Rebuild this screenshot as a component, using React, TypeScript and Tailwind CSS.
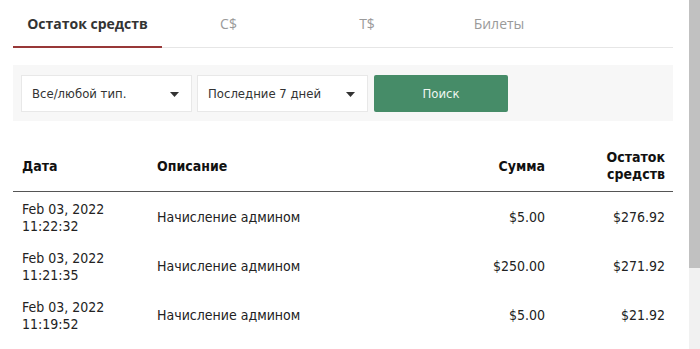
const rows = [
	{ date: "Feb 03, 2022", time: "11:22:32", desc: "Начисление админом", amount: "$5.00", balance: "$276.92" },
	{ date: "Feb 03, 2022", time: "11:21:35", desc: "Начисление админом", amount: "$250.00", balance: "$271.92" },
	{ date: "Feb 03, 2022", time: "11:19:52", desc: "Начисление админом", amount: "$5.00", balance: "$21.92" },
];

const tabs = [
	{ label: "Остаток средств", w: "w-[149px]", active: true },
	{ label: "C$", w: "w-[133px]" },
	{ label: "T$", w: "w-[144px]" },
	{ label: "Билеты", w: "w-[120px]" },
];

const Caret = () => (
	<svg width="9" height="5" viewBox="0 0 9 5" className="shrink-0">
		<path d="M0 0h9L4.5 5z" fill="#333" />
	</svg>
);

const Select = ({ label }: { label: string }) => (
	<div className="flex h-[37px] w-[171px] items-center justify-between border border-[#e8e8e8] bg-white pl-[10px] pr-[12px] pt-[2px] text-[13px] text-[#333]">
		<span>{label}</span>
		<Caret />
	</div>
);

export default function App() {
	return (
		<div className="flex h-[349px] w-[700px] overflow-hidden bg-white font-['DejaVu_Sans_Condensed','DejaVu_Sans',sans-serif]">
			<div className="w-[689px] px-[13px] pr-[16px]">
				<nav className="flex h-[48px] border-b border-[#e6e6e6] font-['Open_Sans',sans-serif] text-[14px]">
					{tabs.map((t) => (
						<div
							key={t.label}
							className={
								t.active
									? `${t.w} -mb-px flex items-center justify-center border-b-2 border-[#983838] font-bold text-[#333]`
									: `${t.w} flex items-center justify-center text-[#9a9a9a]`
							}
						>
							{t.label}
						</div>
					))}
				</nav>

				<div className="mt-[17px] flex h-[56px] items-center gap-[5px] bg-[#f7f7f7] px-[8px]">
					<Select label="Все/любой тип." />
					<Select label="Последние 7 дней" />
					<button className="ml-px h-[37px] w-[134px] rounded-[2px] bg-[#468c68] pt-[2px] text-[13px] text-[#eef6f1]">Поиск</button>
				</div>

				<div className="mt-[20px] text-[14px] text-[#222]">
					<div className="grid h-[51px] grid-cols-[135px_285px_120px_120px] items-center border-b-[1.5px] border-[#555] font-bold text-[#111]">
						<div className="pl-[9px]">Дата</div>
						<div className="pl-[9px]">Описание</div>
						<div className="pr-[8px] text-right">Сумма</div>
						<div className="pr-[8px] text-right leading-[17px]">
							Остаток
							<br />
							средств
						</div>
					</div>
					{rows.map((r) => (
						<div key={r.time} className="grid h-[49px] grid-cols-[135px_285px_120px_120px] items-center pt-[2px]">
							<div className="pl-[9px] leading-[17px]">
								{r.date}
								<br />
								{r.time}
							</div>
							<div className="pl-[9px]">{r.desc}</div>
							<div className="pr-[8px] text-right">{r.amount}</div>
							<div className="pr-[8px] text-right">{r.balance}</div>
						</div>
					))}
				</div>
			</div>

			<div className="flex w-[11px] flex-col bg-[#f1f1f1]">
				<div className="h-[268px] bg-[#c1c1c1]" />
			</div>
		</div>
	);
}
